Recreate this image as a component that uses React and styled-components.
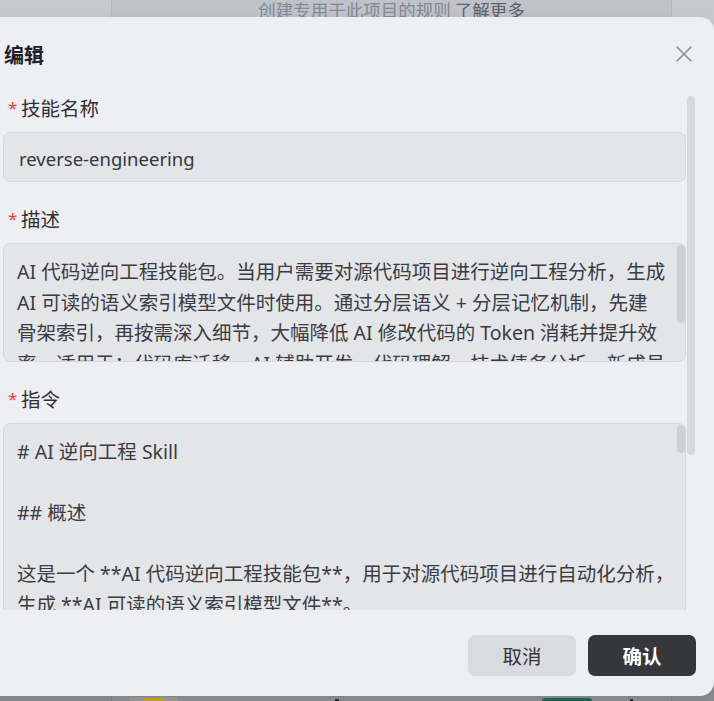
import React from "react";
import styled, { createGlobalStyle } from "styled-components";

const Global = createGlobalStyle`
  html, body { margin: 0; padding: 0; overflow: hidden; background: #c6c8cc; }
  * { box-sizing: border-box; }
`;

const Page = styled.div`
  position: relative;
  width: 714px;
  height: 701px;
  overflow: hidden;
  font-family: "Noto Sans", "Noto Sans CJK SC", sans-serif;
  display: flex;
  flex-direction: column;
`;

const Strip = styled.div`
  display: grid;
  grid-template-columns: 111px 561px 1fr;
  flex: ${(p) => (p.$grow ? 1 : "none")};
  height: ${(p) => (p.$grow ? "auto" : "350px")};
`;

const Side = styled.div`
  background: ${(p) => (p.$dark ? "#898b8e" : "#c7c9cd")};
`;

const Center = styled.div`
  background: ${(p) => (p.$dark ? "#8b8d90" : "#bfc2c8")};
  border-left: 1px solid ${(p) => (p.$dark ? "#7f8184" : "#b3b6bc")};
  border-right: 1px solid ${(p) => (p.$dark ? "#7f8184" : "#b3b6bc")};
  display: flex;
  flex-direction: ${(p) => (p.$dark ? "row" : "column")};
  align-items: ${(p) => (p.$dark ? "flex-end" : "center")};
`;

const HintText = styled.div`
  font-size: 17.5px;
  line-height: 20px;
  color: #838891;
  font-family: "Noto Sans CJK SC", sans-serif;
`;

const HintLink = styled.span`
  color: #5b6069;
`;

const BottomItem = styled.div`
  margin-left: ${(p) => p.$ml}px;
  width: ${(p) => p.$w}px;
  height: ${(p) => p.$h}px;
  background: ${(p) => p.$bg};
  border-radius: ${(p) => p.$r || 0};
  display: flex;
  justify-content: center;
  align-items: flex-end;
  flex-shrink: 0;
`;

const Modal = styled.div`
  position: absolute;
  top: 17px;
  left: -16px;
  width: 730px;
  height: 679px;
  background: #eeeff2;
  border-radius: 14px;
  display: flex;
  flex-direction: column;
  box-shadow: 0 2px 8px rgba(0, 0, 0, 0.08);
`;

const Header = styled.div`
  display: flex;
  align-items: center;
  justify-content: space-between;
  padding: 24px 22px 23px 20px;
`;

const Title = styled.div`
  font-size: 20px;
  line-height: 28px;
  font-weight: 700;
  color: #1f2023;
  font-family: "Noto Sans CJK SC", sans-serif;
`;

const CloseButton = styled.button`
  border: 0;
  padding: 0;
  background: transparent;
  width: 16px;
  height: 16px;
  display: flex;
  margin-top: -2px;
`;

const Body = styled.div`
  position: relative;
  flex: 1;
  overflow: hidden;
  padding: 3px 28px 0 19px;
  display: flex;
  flex-direction: column;
  gap: 24px;
`;

const OuterThumb = styled.div`
  position: absolute;
  right: 19px;
  top: 4px;
  width: 8px;
  height: 359px;
  border-radius: 4px;
  background: #d6d8de;
`;

const Field = styled.div`
  display: flex;
  flex-direction: column;
  gap: 9px;
`;

const Label = styled.div`
  display: flex;
  align-items: center;
  padding-left: 5px;
  font-size: 19.5px;
  line-height: 28px;
  color: #2f3033;
`;

const Star = styled.span`
  width: 13px;
  color: #ee3f34;
  font-size: 17px;
  line-height: 28px;
  position: relative;
  top: -1px;
`;

const InputBox = styled.div`
  height: 50px;
  background: #e3e5e9;
  border: 1px solid #d5d8dd;
  border-radius: 7px;
  padding: 2px 15px 0;
  display: flex;
  align-items: center;
  font-size: 18.5px;
  color: #35373b;
`;

const TextBox = styled.div`
  position: relative;
  height: ${(p) => p.$h}px;
  flex-shrink: 0;
  background: #e3e5e9;
  border: 1px solid #d5d8dd;
  border-radius: 7px;
  padding: 13px 13px;
  font-size: 19.5px;
  line-height: 30.5px;
  color: #3a3c40;
  overflow: hidden;
`;

const Line = styled.div`
  white-space: pre;
  min-height: 30.5px;
`;

const InnerThumb = styled.div`
  position: absolute;
  right: 0;
  top: 1px;
  width: 8px;
  height: ${(p) => p.$h}px;
  border-radius: 4px;
  background: #cdd0d6;
`;

const Footer = styled.div`
  display: flex;
  justify-content: flex-end;
  gap: 12px;
  padding: 25px 18px 20px;
`;

const Button = styled.button`
  width: 108px;
  height: 41px;
  border: 0;
  border-radius: 7px;
  font-family: "Noto Sans CJK SC", sans-serif;
  font-size: 19.5px;
  font-weight: ${(p) => (p.$primary ? 700 : 400)};
  background: ${(p) => (p.$primary ? "#35373b" : "#d9dbe1")};
  color: ${(p) => (p.$primary ? "#ffffff" : "#333438")};
  display: flex;
  align-items: center;
  justify-content: center;
`;

const descLines = [
  "AI 代码逆向工程技能包。当用户需要对源代码项目进行逆向工程分析，生成",
  "AI 可读的语义索引模型文件时使用。通过分层语义 + 分层记忆机制，先建",
  "骨架索引，再按需深入细节，大幅降低 AI 修改代码的 Token 消耗并提升效",
  "率。适用于：代码库迁移、AI 辅助开发、代码理解、技术债务分析、新成员",
];

const instrLines = [
  "# AI 逆向工程 Skill",
  "",
  "## 概述",
  "",
  "这是一个 **AI 代码逆向工程技能包**，用于对源代码项目进行自动化分析，",
  "生成 **AI 可读的语义索引模型文件**。",
  "",
];

export default function App() {
  return (
    <>
      <Global />
      <Page>
        <Strip>
          <Side />
          <Center>
            <HintText>
              创建专用于此项目的规则 <HintLink>了解更多</HintLink>
            </HintText>
          </Center>
          <Side />
        </Strip>
        <Strip $grow>
          <Side $dark />
          <Center $dark>
            <BottomItem $ml={18} $w={48} $h={4} $bg="#9a9a99">
              <BottomItem $ml={0} $w={20} $h={3} $bg="#c9a21e" />
            </BottomItem>
            <BottomItem $ml={157} $w={4} $h={2} $bg="#2a2c33" />
            <BottomItem $ml={203} $w={50} $h={3} $bg="#1e6a4f" $r="25px 25px 0 0" />
            <BottomItem $ml={38} $w={3} $h={2} $bg="#2a2c33" />
          </Center>
          <Side $dark />
        </Strip>

        <Modal>
          <Header>
            <Title>编辑</Title>
            <CloseButton aria-label="关闭">
              <svg width="16" height="16" viewBox="0 0 16 16">
                <path d="M1 1L15 15M15 1L1 15" stroke="#8d8e99" strokeWidth="1.6" strokeLinecap="round" />
              </svg>
            </CloseButton>
          </Header>

          <Body>
            <OuterThumb />
            <Field>
              <Label>
                <Star>*</Star>技能名称
              </Label>
              <InputBox>reverse-engineering</InputBox>
            </Field>
            <Field>
              <Label>
                <Star>*</Star>描述
              </Label>
              <TextBox $h={119}>
                {descLines.map((l, i) => (
                  <Line key={i}>{l}</Line>
                ))}
                <InnerThumb $h={78} />
              </TextBox>
            </Field>
            <Field>
              <Label>
                <Star>*</Star>指令
              </Label>
              <TextBox $h={240}>
                {instrLines.map((l, i) => (
                  <Line key={i}>{l}</Line>
                ))}
                <InnerThumb $h={28} />
              </TextBox>
            </Field>
          </Body>

          <Footer>
            <Button>取消</Button>
            <Button $primary>确认</Button>
          </Footer>
        </Modal>
      </Page>
    </>
  );
}
